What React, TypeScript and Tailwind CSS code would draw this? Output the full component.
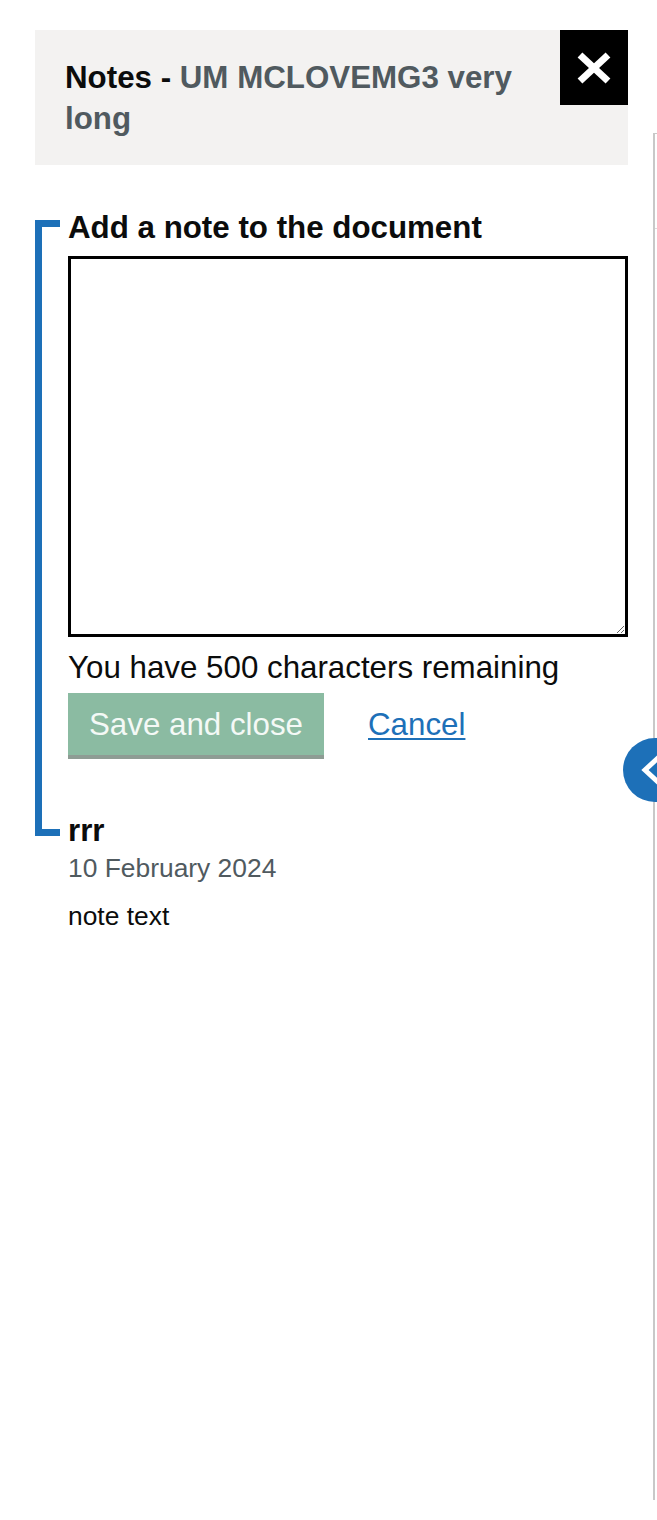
import { useState } from "react";

const MAX_CHARS = 500;

function CloseIcon() {
  return (
    <svg width="36" height="32" viewBox="0 0 36 32" fill="none" stroke="white" strokeWidth={7}>
      <line x1="4" y1="3" x2="32" y2="29" />
      <line x1="32" y1="3" x2="4" y2="29" />
    </svg>
  );
}

export default function App() {
  const [note, setNote] = useState("");
  const remaining = MAX_CHARS - note.length;

  return (
    <div className="relative w-[657px] min-h-[1520px] overflow-hidden bg-white font-['Liberation_Sans',Arial,sans-serif] text-[#0b0c0c]">
      <div className="flex">
        <main className="ml-[35px] mt-[30px] w-[593px] shrink-0">
          {/* Panel header */}
          <div className="flex bg-[#f3f2f1]">
            <h2 className="flex-1 pl-[30px] pt-[27px] pb-[26px] text-[31.3px] leading-[41px] font-bold">
              Notes - <span className="text-[#505a5f]">UM MCLOVEMG3 very long</span>
            </h2>
            <button className="w-[68px] h-[75px] shrink-0 bg-black flex items-center justify-center">
              <CloseIcon />
            </button>
          </div>

          {/* Add note form, bracketed in blue */}
          <div className="mt-[43px] flex">
            <div className="w-[25px] flex flex-col pt-[12px] pb-[14px]">
              <div className="h-[7px] w-full bg-[#1d70b8]" />
              <div className="w-[7px] flex-1 bg-[#1d70b8]" />
              <div className="h-[7px] w-full bg-[#1d70b8]" />
            </div>

            <div className="ml-[8px] w-[560px]">
              <label className="block text-[31.3px] leading-[39px] font-bold">
                Add a note to the document
              </label>
              <textarea
                value={note}
                onChange={(e) => setNote(e.target.value)}
                className="mt-[9px] block w-full h-[381px] border-[3px] border-black bg-white outline-none"
              />
              <p className="mt-[11px] text-[31.3px] leading-[39px]">
                You have {remaining} characters remaining
              </p>

              <div className="mt-[6px] flex items-center">
                <button
                  disabled
                  className="h-[62px] px-[21px] bg-[#8bbba2] text-[#f4f9f6] text-[31.3px] leading-[39px] shadow-[0_4px_0_#8e9c94]"
                >
                  Save and close
                </button>
                <a href="#" className="ml-[44px] text-[31.3px] leading-[39px] text-[#1d70b8] underline decoration-2 underline-offset-[3px]">
                  Cancel
                </a>
              </div>

              <p className="mt-[56px] text-[31.3px] leading-[39px] font-bold">rrr</p>
            </div>
          </div>

          {/* Existing note meta */}
          <div className="ml-[33px]">
            <p className="mt-[2px] text-[26.4px] leading-[33px] text-[#505a5f]">10 February 2024</p>
            <p className="mt-[15px] text-[26.4px] leading-[33px]">note text</p>
          </div>
        </main>

        {/* Document viewer edge */}
        <aside className="ml-[25px] mt-[133px] h-[1367px] flex-1 border-l-2 border-t border-[#c8c8c8]">
          <div className="mt-[94px] border-t border-[#dcdcdc]" />
        </aside>
      </div>

      {/* Collapse toggle */}
      <button className="absolute left-[623px] top-[738px] w-[64px] h-[64px] rounded-full bg-[#1d70b8] flex items-center">
        <svg width="64" height="64" viewBox="0 0 64 64" fill="none" stroke="white" strokeWidth={5}>
          <path d="M36 19 L22 32 L36 45" />
        </svg>
      </button>
    </div>
  );
}
